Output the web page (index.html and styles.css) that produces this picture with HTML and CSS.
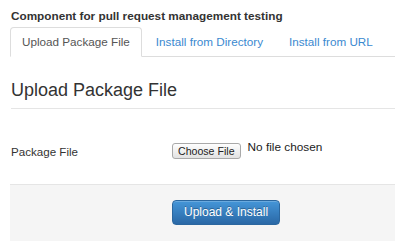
FILE: index.html
```html
<!DOCTYPE html>
<html>
<head>
<meta charset="utf-8">
<link rel="stylesheet" href="styles.css">
</head>
<body>
<div class="page">
  <h2 class="title">Component for pull request management testing</h2>
  <ul class="tabs">
    <li class="tab active"><a href="#">Upload Package File</a></li>
    <li class="tab"><a href="#">Install from Directory</a></li>
    <li class="tab"><a href="#">Install from URL</a></li>
  </ul>
  <form class="form">
    <div class="legend">Upload Package File</div>
    <div class="row">
      <label class="label">Package File</label>
      <div class="file">
        <span class="file-btn">Choose File</span>
        <span class="file-name">No file chosen</span>
      </div>
    </div>
    <div class="actions">
      <button type="button" class="btn-primary">Upload &amp; Install</button>
    </div>
  </form>
</div>
</body>
</html>
```

FILE: styles.css
```css
html, body {
  margin: 0;
  padding: 0;
  background: #fff;
  overflow: hidden;
}
body {
  font-family: "Liberation Sans", Arial, sans-serif;
  font-size: 12px;
  line-height: 18px;
  color: #333;
}
.page {
  padding: 7px 0 0 10px;
}
.title {
  margin: 0 0 2px 1px;
  font-size: 11.75px;
  line-height: 18px;
  font-weight: bold;
  color: #333;
}
.tabs {
  list-style: none;
  margin: 0;
  padding: 0;
  display: flex;
  border-bottom: 1px solid #ddd;
}
.tab {
  margin: 0 2px -1px 0;
  flex: none;
}
.tab a {
  display: block;
  padding: 5px 11px;
  font-size: 11.7px;
  line-height: 18px;
  border: 1px solid transparent;
  border-radius: 4px 4px 0 0;
  text-decoration: none;
  color: #3a89d0;
  white-space: nowrap;
}
.tab.active a {
  color: #555;
  background: #fff;
  border-color: #ddd #ddd transparent #ddd;
}
.form {
  margin: 0;
  padding-top: 15px;
}
.legend {
  margin-left: 1px;
  font-size: 18px;
  line-height: 36px;
  color: #333;
  border-bottom: 1px solid #e5e5e5;
  margin-bottom: 34px;
}
.row {
  display: grid;
  grid-template-columns: 162px auto;
  align-items: start;
  margin-bottom: 23px;
}
.label {
  padding-left: 1px;
  line-height: 18px;
  font-size: 11.6px;
}
.file {
  display: flex;
  align-items: flex-start;
}
.file-btn {
  display: block;
  height: 14px;
  padding: 0 5px;
  border: 1px solid #a9a9a9;
  border-radius: 3px;
  background: linear-gradient(#fefefe, #e2e2e2);
  font-size: 10.6px;
  line-height: 15px;
  color: #222;
}
.file-name {
  margin-left: 7px;
  margin-top: -5px;
  font-size: 11.8px;
  line-height: 18px;
  color: #222;
}
.actions {
  border-top: 1px solid #e5e5e5;
  background: #f5f5f5;
  padding: 15px 0 16px 162px;
  margin-bottom: 10px;
}
.btn-primary {
  display: block;
  margin: 0;
  padding: 3px 11px;
  font-family: "Liberation Sans", Arial, sans-serif;
  font-size: 12px;
  line-height: 17px;
  color: #fff;
  text-shadow: 0 -1px 0 rgba(0, 0, 0, 0.3);
  border: 1px solid #2b679f;
  border-radius: 4px;
  background: linear-gradient(#4596d8, #2a68a6);
  box-shadow: inset 0 1px 0 rgba(255, 255, 255, 0.2);
}
```
